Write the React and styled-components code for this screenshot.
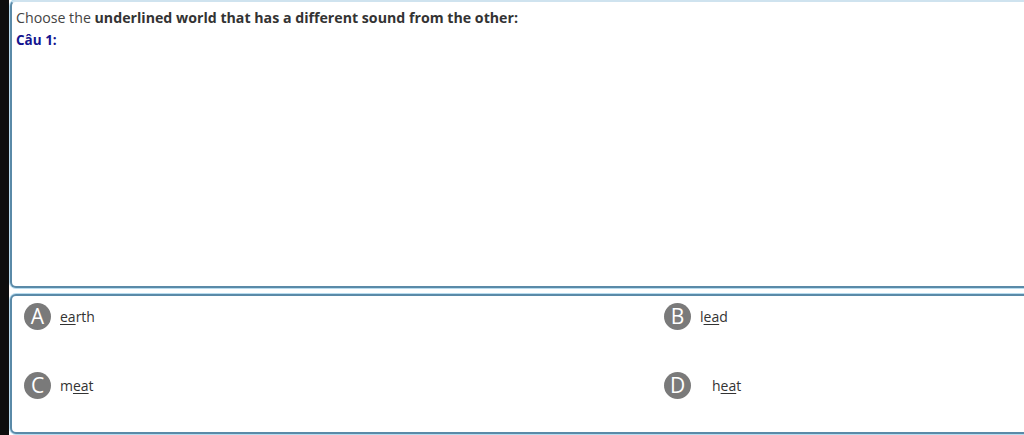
import styled, { createGlobalStyle } from "styled-components";

const Global = createGlobalStyle`
  html, body {
    margin: 0;
    padding: 0;
    background: #fff;
    overflow: hidden;
  }
  body {
    font-family: "Open Sans", "Noto Sans", sans-serif;
  }
`

const Page = styled.div`
  display: flex;
  flex-direction: column;
  gap: 6px;
  width: 1040px;
  height: 435px;
  border-left: 9px solid #0d0d0d;
  box-sizing: border-box;
  padding: 0 0 1px 1px;
`

const Panel = styled.div`
  border: 2px solid #5a8aa8;
  border-radius: 6px;
  box-shadow: 0 0 0 1px #b8dcef;
  background: #fff;
  box-sizing: border-box;
`

const QuestionPanel = styled(Panel)`
  height: 288px;
  border-top-color: #cfe3ef;
  padding: 5px 4px;
`

const Prompt = styled.div`
  font-size: 14.2px;
  color: #444;
  line-height: 22px;
  b {
    color: #333;
  }
`

const Label = styled.div`
  font-size: 13.5px;
  font-weight: bold;
  color: #14148f;
  line-height: 22px;
`

const AnswerPanel = styled(Panel)`
  flex: 1;
  display: grid;
  grid-template-columns: 640px 1fr;
  grid-template-rows: 69px 1fr;
  padding: 7px 12px 0;
`

const Option = styled.div`
  display: flex;
  align-items: center;
  align-self: start;
  gap: 9px;
  height: 26px;
`

const Badge = styled.span`
  width: 27px;
  height: 27px;
  border-radius: 50%;
  background: #7a7a7a;
  color: #fff;
  font-size: 21px;
  display: flex;
  align-items: center;
  justify-content: center;
  line-height: 1;
`

const Word = styled.span`
  font-size: 14px;
  color: #333;
  padding-left: ${p => p.$shift || 0}px;
  u {
    text-underline-offset: 2px;
  }
`

const options = [
  { key: "A", pre: "", mark: "ea", post: "rth" },
  { key: "B", pre: "l", mark: "ea", post: "d" },
  { key: "C", pre: "m", mark: "ea", post: "t" },
  { key: "D", pre: "h", mark: "ea", post: "t", shift: 12 },
]

function App() {
  return (
    <>
      <Global />
      <Page>
        <QuestionPanel>
          <Prompt>
            Choose the <b>underlined world that has a different sound from the other:</b>
          </Prompt>
          <Label>Câu 1:</Label>
        </QuestionPanel>
        <AnswerPanel>
          {options.map(o => (
            <Option key={o.key}>
              <Badge>{o.key}</Badge>
              <Word $shift={o.shift}>
                {o.pre}<u>{o.mark}</u>{o.post}
              </Word>
            </Option>
          ))}
        </AnswerPanel>
      </Page>
    </>
  )
}

export default App
